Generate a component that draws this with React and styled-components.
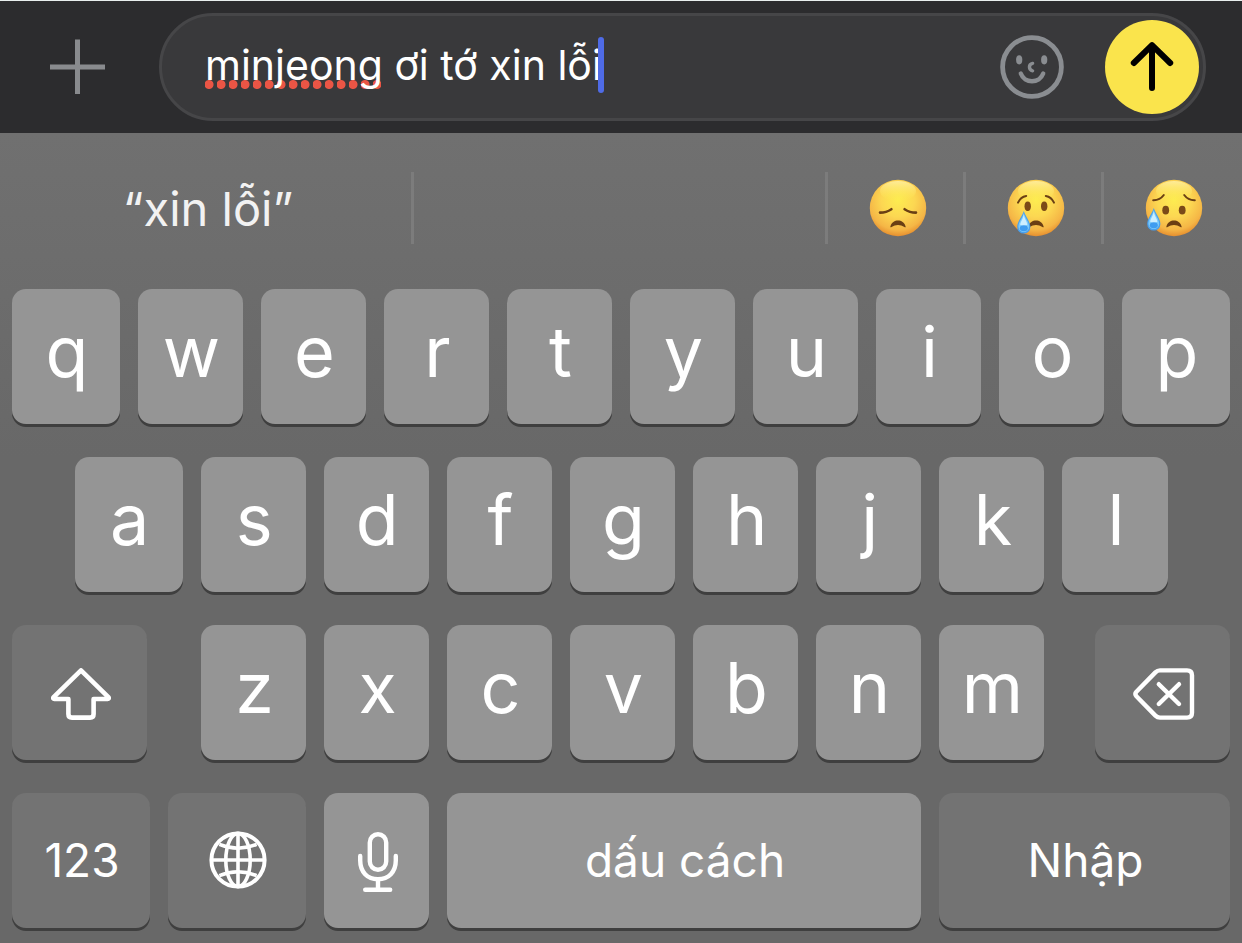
import { useState } from 'react'
import styled, { createGlobalStyle } from 'styled-components'

const rowOne = ['q', 'w', 'e', 'r', 't', 'y', 'u', 'i', 'o', 'p']
const rowTwo = ['a', 's', 'd', 'f', 'g', 'h', 'j', 'k', 'l']
const rowThree = ['z', 'x', 'c', 'v', 'b', 'n', 'm']
const wideLetters = ['q', 'p', 'a']

export default function App() {
  const [message, setMessage] = useState('minjeong ơi tớ xin lỗi')

  return (
    <>
      <GlobalStyle />
      <Composer>
        <AddButton type="button" aria-label="Thêm">
          <PlusIcon />
        </AddButton>
        <Pill>
          <Field>
            <SpellDots />
            <MessageInput
              type="text"
              aria-label="Tin nhắn"
              spellCheck={false}
              value={message}
              onChange={(e) => setMessage(e.target.value)}
            />
            <Caret />
          </Field>
          <IconButton type="button" aria-label="Biểu tượng cảm xúc">
            <SmileIcon />
          </IconButton>
          <SendButton type="button" aria-label="Gửi">
            <ArrowIcon />
          </SendButton>
        </Pill>
      </Composer>

      <Keyboard>
        <Suggestions>
          <Suggestion type="button">“xin lỗi”</Suggestion>
          <Suggestion type="button" aria-label="Gợi ý trống" />
          <Suggestion type="button" aria-label="Thất vọng">
            <SadFace />
          </Suggestion>
          <Suggestion type="button" aria-label="Khóc">
            <CryingFace />
          </Suggestion>
          <Suggestion type="button" aria-label="Buồn nhưng nhẹ nhõm">
            <RelievedFace />
          </Suggestion>
        </Suggestions>

        <Rows>
          <Row>
            <LetterKeys letters={rowOne} />
          </Row>
          <Row $inset>
            <LetterKeys letters={rowTwo} />
          </Row>
          <Row>
            <IconKey type="button" $grow={135} aria-label="Shift">
              <ShiftIcon />
            </IconKey>
            <LetterGroup>
              <LetterKeys letters={rowThree} />
            </LetterGroup>
            <IconKey type="button" $grow={135} aria-label="Xóa">
              <BackspaceIcon />
            </IconKey>
          </Row>
          <Row>
            <FunctionKey type="button" $grow={138}>
              123
            </FunctionKey>
            <FunctionKey type="button" $grow={138} aria-label="Ngôn ngữ">
              <GlobeIcon />
            </FunctionKey>
            <IconKey type="button" $grow={105} $light aria-label="Đọc chính tả">
              <MicIcon />
            </IconKey>
            <FunctionKey type="button" $grow={474} $light>
              dấu cách
            </FunctionKey>
            <FunctionKey type="button" $grow={291}>
              Nhập
            </FunctionKey>
          </Row>
        </Rows>
      </Keyboard>
    </>
  )
}

function LetterKeys({ letters }) {
  return letters.map((letter) => (
    <Key type="button" key={letter} $grow={wideLetters.includes(letter) ? 108 : 105}>
      {letter}
    </Key>
  ))
}

function PlusIcon() {
  return (
    <svg width="56" height="56" viewBox="0 0 56 56" fill="none" stroke="#898b8e" strokeWidth="5">
      <path d="M27.5 0.5V55M0 28H55" />
    </svg>
  )
}

function SmileIcon() {
  return (
    <svg width="64" height="64" viewBox="0 0 64 64" fill="none" stroke="#8a8d91" strokeLinecap="round">
      <circle cx="32" cy="32" r="29.4" strokeWidth="4.8" />
      <ellipse cx="19.2" cy="24.8" rx="3.1" ry="4.6" fill="#8a8d91" stroke="none" />
      <ellipse cx="44.2" cy="24.8" rx="3.1" ry="4.6" fill="#8a8d91" stroke="none" />
      <path d="M32.6 28.4C28.4 29.2 28.4 35 32.6 35.8" strokeWidth="3.4" />
      <path d="M20.8 38.6C24.5 48.8 39.5 48.8 43.2 38.6" strokeWidth="4.4" />
    </svg>
  )
}

function ArrowIcon() {
  return (
    <svg
      width="94"
      height="94"
      viewBox="0 0 94 94"
      fill="none"
      stroke="#000"
      strokeWidth="6"
      strokeLinecap="round"
      strokeLinejoin="round"
    >
      <path d="M47 26V68M28.8 43L47 25.2L65.2 43" />
    </svg>
  )
}

function ShiftIcon() {
  return (
    <svg
      width="60"
      height="52"
      viewBox="0 0 60 52"
      fill="none"
      stroke="#fff"
      strokeWidth="4.6"
      strokeLinejoin="round"
    >
      <path d="M30 2.4L2.4 29.4Q1.8 31 3.4 31H17.4V46Q17.4 49.6 21 49.6H39Q42.6 49.6 42.6 46V31H56.6Q58.2 31 57.6 29.4Z" />
    </svg>
  )
}

function BackspaceIcon() {
  return (
    <svg
      width="62"
      height="52"
      viewBox="0 0 62 52"
      fill="none"
      stroke="#fff"
      strokeWidth="4.4"
      strokeLinecap="round"
      strokeLinejoin="round"
    >
      <path d="M27 2.4H54Q59 2.4 59 7.2V44.8Q59 49.6 54 49.6H27Q24.4 49.6 22.4 47.6L3.4 28.2Q1.4 26 3.4 23.8L22.4 4.4Q24.4 2.4 27 2.4Z" />
      <path d="M25.8 16.2L46 36M46 16.2L25.8 36" />
    </svg>
  )
}

function GlobeIcon() {
  return (
    <svg width="58" height="58" viewBox="0 0 58 58" fill="none" stroke="#fff" strokeWidth="3.6">
      <circle cx="29" cy="29" r="26.6" strokeWidth="4" />
      <ellipse cx="29" cy="29" rx="12.2" ry="26.6" />
      <path d="M29 2.4V55.6M2.4 29H55.6" />
      <path d="M10.4 13.4Q29 21 47.6 13.4M10.4 44.6Q29 37 47.6 44.6" />
    </svg>
  )
}

function MicIcon() {
  return (
    <svg width="40" height="60" viewBox="0 0 40 60" fill="none" stroke="#fff" strokeWidth="4.4" strokeLinecap="round">
      <rect x="11.8" y="2.2" width="16.4" height="35.6" rx="8.2" />
      <path d="M2.2 24V28.6C2.2 40 9.4 47.2 20 47.2S37.8 40 37.8 28.6V24M20 47.2V57.6M7.2 57.8H32.2" />
    </svg>
  )
}

function Face({ id, children }) {
  return (
    <svg width="60" height="60" viewBox="0 0 60 60" fill="none" strokeLinecap="round">
      <defs>
        <radialGradient id={`${id}-skin`} cx="0.5" cy="0.36" r="0.66">
          <stop offset="0" stopColor="#fdec50" />
          <stop offset="0.45" stopColor="#fcd752" />
          <stop offset="0.8" stopColor="#f5b646" />
          <stop offset="1" stopColor="#e3882b" />
        </radialGradient>
        <linearGradient id={`${id}-shine`} x1="0" y1="0" x2="0" y2="1">
          <stop offset="0" stopColor="#fff6b8" stopOpacity="0.7" />
          <stop offset="1" stopColor="#fff04c" stopOpacity="0" />
        </linearGradient>
      </defs>
      <circle cx="30" cy="30" r="28.2" fill={`url(#${id}-skin)`} />
      <ellipse cx="30" cy="13" rx="18" ry="10" fill={`url(#${id}-shine)`} />
      {children}
      <path
        d="M22.4 48.4C24.6 40.6 35.4 40.6 37.6 48.4C38 49.4 37.2 49.6 36.4 49C32.6 46.2 27.4 46.2 23.6 49C22.8 49.6 22 49.4 22.4 48.4Z"
        fill="#6a3f14"
      />
    </svg>
  )
}

function SadFace() {
  return (
    <Face id="sad">
      <path d="M12 34.6Q18.4 34.6 23.4 31.2M36.6 31.2Q41.6 34.6 48 34.6" stroke="#6a3f14" strokeWidth="2.6" />
    </Face>
  )
}

function CryingFace() {
  return (
    <Layered>
      <Face id="crying">
        <path d="M12 24.6Q14.6 19 20.2 18M39.8 18Q45.4 19 48 24.6" stroke="#6a3f14" strokeWidth="2" />
        <ellipse cx="21.7" cy="28.2" rx="3.2" ry="4.8" fill="#7a4a18" />
        <ellipse cx="38.2" cy="28.2" rx="3.2" ry="4.8" fill="#7a4a18" />
      </Face>
      <Tear x="11" y="33" />
    </Layered>
  )
}

function RelievedFace() {
  return (
    <Layered>
      <Face id="relieved">
        <path d="M9.2 22.2Q15.8 22.4 19.8 17M40.2 17Q44.2 22.4 50.8 22.2" stroke="#6a3f14" strokeWidth="2" />
        <ellipse cx="21.7" cy="32.2" rx="3.4" ry="4.4" fill="#7a4a18" />
        <ellipse cx="38.2" cy="32.2" rx="3.4" ry="4.4" fill="#7a4a18" />
      </Face>
      <Tear x="3" y="30" />
    </Layered>
  )
}

// both faces share one drop, placed on top of the face and its mouth
function Tear({ x, y }) {
  return (
    <svg width="60" height="60" viewBox="0 0 60 60">
      <g transform={`translate(${x} ${y})`}>
        <path d="M6.8 0C8.4 5.6 13.4 10.4 13.4 16A6.6 6.6 0 0 1 0.2 16C0.2 10.4 5.2 5.6 6.8 0Z" fill="#4a9fec" />
        <path d="M6.8 2C8 7 12.2 11 12.2 15.6A5.4 5.4 0 0 1 1.4 15.6C1.4 11 5.6 7 6.8 2Z" fill="#7ccafa" />
        <path d="M6.8 3C7.4 8 10.4 11 10.4 13.8Q6.8 16 3.2 13.8C3.2 11 6.2 8 6.8 3Z" fill="#cdeeff" />
        <ellipse cx="6.8" cy="17.2" rx="4" ry="3" fill="#3f9cf0" />
      </g>
    </svg>
  )
}

const GlobalStyle = createGlobalStyle`
  * {
    box-sizing: border-box;
  }

  body {
    margin: 0;
    background: #686868;
    font-family: Inter, 'Liberation Sans', sans-serif;
  }

  button,
  input {
    margin: 0;
    padding: 0;
    border: 0;
    background: none;
    color: #fff;
    font-family: inherit;
  }

  svg {
    display: block;
    flex-shrink: 0;
  }
`

const Composer = styled.header`
  display: flex;
  align-items: center;
  padding: 12px 36px 12px 0;
  border-top: 1px solid #e9efee;
  background: #2c2c2e;
`

const AddButton = styled.button`
  display: flex;
  align-items: center;
  justify-content: center;
  width: 155px;
  margin-right: 4px;
`

const Pill = styled.div`
  display: flex;
  flex: 1;
  align-items: center;
  min-width: 0;
  height: 108px;
  padding: 0 4px 0 43px;
  border: 3px solid #464648;
  border-radius: 54px;
  background: #39393b;
`

const Field = styled.div`
  position: relative;
  flex: 1;
  min-width: 0;
  height: 56px;
  margin-bottom: 4px;
`

const MessageInput = styled.input`
  position: relative;
  width: 100%;
  height: 56px;
  font-size: 41px;
  outline: none;
`

const SpellDots = styled.span`
  position: absolute;
  left: 0;
  bottom: 4px;
  width: 176px;
  height: 9px;
  background: radial-gradient(circle at 4px 50%, #ea5545 4px, transparent 5px) 0 0 / 12px 9px repeat-x;
`

const Caret = styled.span`
  position: absolute;
  left: 393px;
  top: 0;
  width: 6px;
  height: 56px;
  border-radius: 3px;
  background: #4f6be6;
`

const IconButton = styled.button`
  margin: 0 41px 0 24px;
`

const SendButton = styled.button`
  width: 94px;
  height: 94px;
  border-radius: 50%;
  background: #fae44c;
`

const Keyboard = styled.main`
  background: linear-gradient(#707070, #686868 40%, #686868);
`

const Suggestions = styled.div`
  display: grid;
  grid-template-columns: 3fr 3fr 1fr 1fr 1fr;
  padding: 39px 0 45px;
`

const Suggestion = styled.button`
  display: flex;
  align-items: center;
  justify-content: center;
  height: 72px;
  padding-left: 2px;
  color: #f2f2f2;
  font-size: 47px;

  &:not(:last-child) {
    box-shadow: inset -3px 0 #7c7c7c;
  }
`

const Layered = styled.span`
  display: grid;

  > svg {
    grid-area: 1 / 1;
  }
`

const Rows = styled.div`
  display: flex;
  flex-direction: column;
  gap: 33px;
  padding-bottom: 15px;
`

const Row = styled.div`
  display: flex;
  gap: 18px;
  padding: 0 ${(props) => (props.$inset ? '6%' : '12px')};
`

const LetterGroup = styled.div`
  display: flex;
  flex: 843 1 0;
  gap: 18px;
  margin: 0 33px 0 36px;
`

const Key = styled.button`
  display: flex;
  flex: ${(props) => props.$grow} 1 0;
  align-items: center;
  justify-content: center;
  min-width: 0;
  height: 135px;
  padding-bottom: 10px;
  border-radius: 14px;
  background: #959595;
  box-shadow: 0 3px #3f3f3f;
  font-size: 70px;
  font-weight: 400;
  text-indent: 2px;

  svg {
    margin-left: 2px;
  }
`

const FunctionKey = styled(Key)`
  padding-bottom: 2px;
  background: ${(props) => (props.$light ? '#959595' : '#737373')};
  font-size: 46px;
`

const IconKey = styled(FunctionKey)`
  padding: 3px 0 0;
`
